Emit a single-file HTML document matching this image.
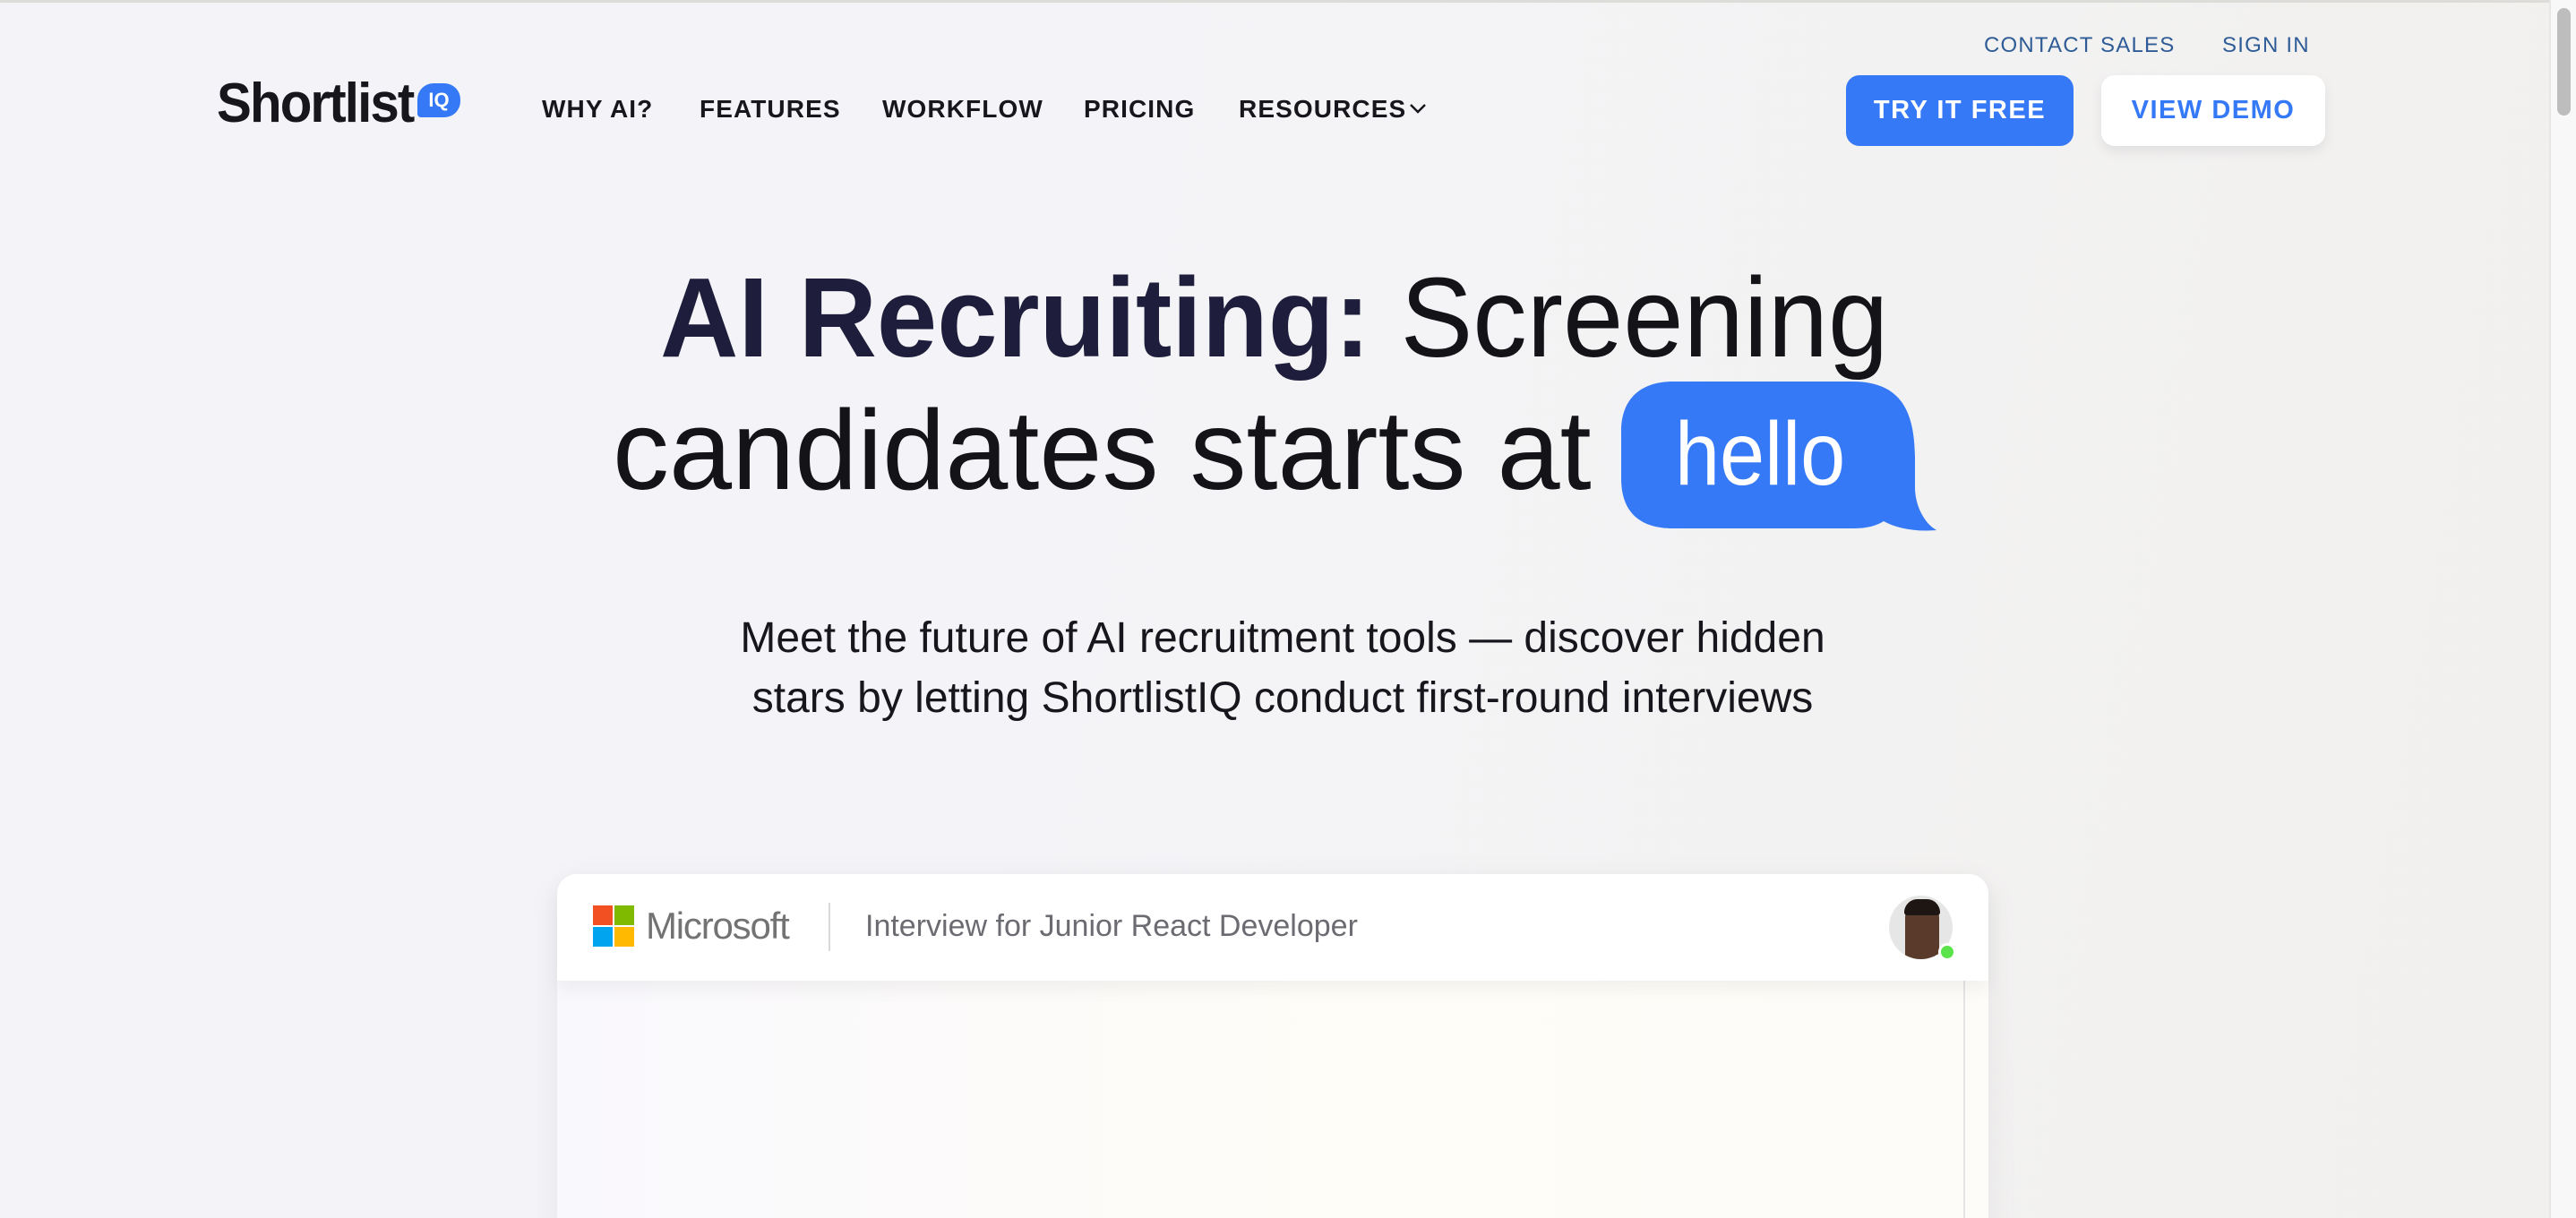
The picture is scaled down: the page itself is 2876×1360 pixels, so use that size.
<!DOCTYPE html>
<html><head><meta charset="utf-8"><style>
*{margin:0;padding:0;box-sizing:border-box}
html,body{width:2876px;height:1360px;overflow:hidden}
body{position:relative;font-family:"Liberation Sans",sans-serif;background:linear-gradient(100deg,#f3f3f8 0%,#f4f4f8 40%,#f3f2f2 70%,#f1f0ee 100%);}
.topline{position:absolute;left:0;top:0;width:2846px;height:3px;background:#dcdcd8}
.sb{position:absolute;right:0;top:0;width:30px;height:1360px;background:#f8f8f8;border-left:2px solid #e6e6e6}
.sb i{position:absolute;left:7px;top:9px;width:15px;height:120px;border-radius:8px;background:#bdbdbd}
.a{position:absolute;white-space:nowrap}
.nav{font-size:28px;font-weight:700;color:#16161c;letter-spacing:1.1px;top:106px}
.top{font-size:24px;color:#2f5c96;letter-spacing:1.2px;top:37px}
.btn{position:absolute;top:84px;height:79px;border-radius:15px;font-size:29px;font-weight:700;letter-spacing:1.5px;display:flex;align-items:center;justify-content:center}
.h{font-size:126px;transform-origin:0 0;color:#131318}
.sub{font-size:48px;color:#16161c;text-align:center;width:2876px;left:-6px;line-height:67px}
</style></head><body>
<div class="topline"></div>
<div class="sb"><i></i></div>

<div class="a" style="left:242px;top:80px;font-size:62px;font-weight:700;color:#16161c;letter-spacing:-2px;transform:scaleX(0.94);transform-origin:0 0">Shortlist</div>
<div class="a" style="left:466px;top:93px;width:48px;height:38px;background:#3579f6;border-radius:18px 18px 18px 4px;color:#fff;font-size:22px;font-weight:700;text-align:center;line-height:38px">IQ</div>

<div class="a nav" style="left:605px">WHY AI?</div>
<div class="a nav" style="left:781px">FEATURES</div>
<div class="a nav" style="left:985px">WORKFLOW</div>
<div class="a nav" style="left:1210px">PRICING</div>
<div class="a nav" style="left:1383px">RESOURCES</div>
<svg class="a" style="left:1572px;top:114px" width="22" height="14" viewBox="0 0 22 14"><path d="M3 3l8 8 8-8" fill="none" stroke="#16161c" stroke-width="2.5"/></svg>

<div class="a top" style="left:2215px">CONTACT SALES</div>
<div class="a top" style="left:2481px">SIGN IN</div>
<div class="btn" style="left:2061px;width:254px;background:#3579f6;color:#fff">TRY IT FREE</div>
<div class="btn" style="left:2346px;width:250px;background:#fff;color:#3579f6;box-shadow:0 6px 14px rgba(0,0,30,0.08)">VIEW DEMO</div>

<div class="a h" style="left:737px;top:282px;transform:scaleX(0.96)"><b style="color:#1e1e3c">AI Recruiting:</b> <span style="font-weight:300">Screening</span></div>
<div class="a h" style="left:684px;top:430px;transform:scaleX(1.0)">candidates starts at</div>
<svg class="a" style="left:1808px;top:424px" width="356" height="170" viewBox="0 0 356 170"><path d="M60 2H260C318 2 330 40 330 90V120C330 140 340 160 354 168C330 170 310 166 295 158C285 164 275 166 260 166H60C25 166 2 150 2 110V58C2 20 25 2 60 2Z" fill="#3579f6"/></svg>
<div class="a" style="left:1870px;top:450px;font-size:100px;color:#fff;transform:scaleX(0.9);transform-origin:0 0">hello</div>

<div class="a sub" style="top:679px">Meet the future of AI recruitment tools — discover hidden<br>stars by letting ShortlistIQ conduct first-round interviews</div>

<div class="a" style="left:622px;top:976px;width:1598px;height:420px;background:linear-gradient(90deg,#f9f8fc,#fffdf8 55%,#fdfcf8);border-radius:22px;box-shadow:0 10px 40px rgba(0,0,0,0.06)"></div>
<div class="a" style="left:2192px;top:1095px;width:2px;height:270px;background:#e4e4e4"></div>
<div class="a" style="left:622px;top:976px;width:1598px;height:119px;background:#fff;border-radius:22px 22px 0 0;box-shadow:0 10px 20px rgba(0,0,0,0.05)"></div>
<div class="a" style="left:662px;top:1011px;width:22px;height:22px;background:#f25022"></div>
<div class="a" style="left:686px;top:1011px;width:22px;height:22px;background:#7fba00"></div>
<div class="a" style="left:662px;top:1035px;width:22px;height:22px;background:#00a4ef"></div>
<div class="a" style="left:686px;top:1035px;width:22px;height:22px;background:#ffb900"></div>
<div class="a" style="left:721px;top:1010px;font-size:42px;color:#737373;letter-spacing:-1.2px">Microsoft</div>
<div class="a" style="left:925px;top:1008px;width:2px;height:54px;background:#d8d8d8"></div>
<div class="a" style="left:966px;top:1015px;font-size:34px;color:#6b6b72">Interview for Junior React Developer</div>
<div class="a" style="left:2109px;top:1000px;width:71px;height:71px;border-radius:50%;background:#e6e6e6;overflow:hidden">
  <div style="position:absolute;left:18px;top:6px;width:38px;height:70px;border-radius:18px 18px 6px 6px;background:#5a3a2a"></div>
  <div style="position:absolute;left:17px;top:4px;width:40px;height:18px;border-radius:18px 18px 4px 4px;background:#1e1612"></div>
</div>
<div class="a" style="left:2164px;top:1053px;width:20px;height:20px;border-radius:50%;background:#5ae34a;border:3px solid #fff"></div>
</body></html>
